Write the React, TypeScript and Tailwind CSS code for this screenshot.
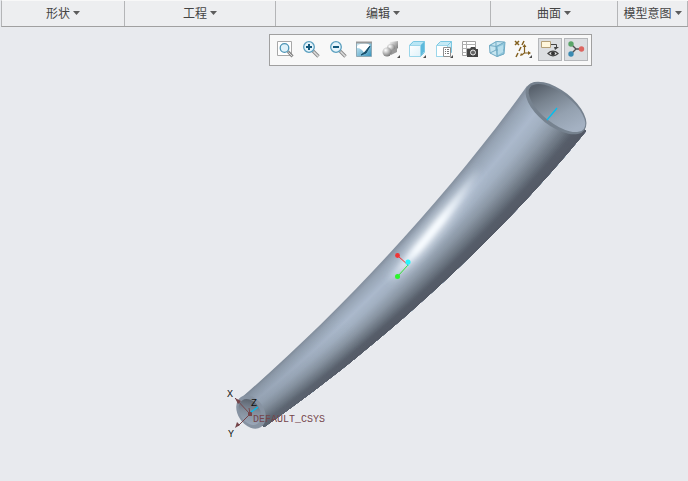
import type { ReactNode } from 'react'

type Point = [number, number]

const menus = ['形状', '工程', '编辑', '曲面', '模型意图']

// Silhouette of the swept tube as cubic control points
const upperEdge: Point[] = [[241, 398], [337, 315], [446, 199], [527, 86]]
const lowerEdge: Point[] = [[264, 427], [365, 357], [490, 249], [586, 131]]

// Shading across the tube, from the upper edge to the lower one
const shades: [number, number[]][] = [
  [0, [132, 144, 158]],
  [0.08, [150, 163, 179]],
  [0.3, [171, 185, 204]],
  [0.45, [162, 176, 193]],
  [0.62, [139, 151, 165]],
  [0.78, [108, 118, 130]],
  [0.88, [87, 94, 106]],
  [1, [84, 90, 102]],
]

const BANDS = 48

const mix = (t: number) =>
  upperEdge.map(([x, y], i) => [x + (lowerEdge[i][0] - x) * t, y + (lowerEdge[i][1] - y) * t])

const shadeAt = (t: number) => {
  const i = Math.max(1, shades.findIndex(([stop]) => stop >= t))
  const [a, from] = shades[i - 1]
  const [b, to] = shades[i]
  const k = (t - a) / (b - a)
  return `rgb(${from.map((c, n) => Math.round(c + (to[n] - c) * k)).join(',')})`
}

const bands = Array.from({ length: BANDS }, (_, i) => {
  const [a, b, c, d] = mix(i / BANDS)
  const [e, f, g, h] = mix(1)
  return {
    d: `M${a} C${b} ${c} ${d} L${h} C${g} ${f} ${e} Z`,
    fill: shadeAt((i + 0.5) / BANDS),
  }
})

const Tube = () => (
  <svg className="block h-auto w-full" viewBox="0 27 688 454" role="img" aria-label="DEFAULT_CSYS">
    <defs>
      <linearGradient id="topBore" x1="530" y1="98" x2="580" y2="122" gradientUnits="userSpaceOnUse">
        <stop offset="0" stopColor="#59626d" />
        <stop offset="0.3" stopColor="#78838f" />
        <stop offset="0.65" stopColor="#94a1b0" />
        <stop offset="1" stopColor="#a4b1c2" />
      </linearGradient>
      <linearGradient id="endBore" x1="240" y1="403" x2="259" y2="420" gradientUnits="userSpaceOnUse">
        <stop offset="0" stopColor="#59616c" />
        <stop offset="0.5" stopColor="#828d9b" />
        <stop offset="1" stopColor="#9aa7b8" />
      </linearGradient>
      <linearGradient id="endShade" x1="250" y1="412" x2="345" y2="318" gradientUnits="userSpaceOnUse">
        <stop offset="0" stopColor="#6c7885" stopOpacity="0.35" />
        <stop offset="1" stopColor="#6c7885" stopOpacity="0" />
      </linearGradient>
      <linearGradient id="shine" x1="388" y1="282" x2="480" y2="168" gradientUnits="userSpaceOnUse">
        <stop offset="0" stopColor="#e6f0fb" stopOpacity="0" />
        <stop offset="0.3" stopColor="#f8fcff" />
        <stop offset="0.55" stopColor="#f8fcff" />
        <stop offset="1" stopColor="#e6f0fb" stopOpacity="0" />
      </linearGradient>
      <filter id="soft" x="-50%" y="-50%" width="200%" height="200%">
        <feGaussianBlur stdDeviation="2" />
      </filter>
      <filter id="glow" x="-50%" y="-50%" width="200%" height="200%">
        <feGaussianBlur stdDeviation="5" />
      </filter>
    </defs>

    {bands.map((band, i) => (
      <path key={i} d={band.d} fill={band.fill} />
    ))}
    <path d={bands[0].d} fill="url(#endShade)" />
    <path
      d="M382 288Q434 235 486 160"
      fill="none"
      stroke="url(#shine)"
      strokeWidth="15"
      opacity="0.65"
      filter="url(#glow)"
    />
    <path d="M388 282Q434 234 480 168" fill="none" stroke="url(#shine)" strokeWidth="7" filter="url(#soft)" />

    <ellipse cx="556" cy="108" rx="36" ry="18" transform="rotate(38 556 108)" fill="#76828f" />
    <ellipse cx="557" cy="108" rx="34" ry="15" transform="rotate(38 557 108)" fill="url(#topBore)" />
    <path d="M547 120L557 108" stroke="#00bfef" strokeWidth="1.3" />

    <ellipse cx="251" cy="412" rx="18" ry="13" transform="rotate(56 251 412)" fill="#8793a2" />
    <ellipse cx="250" cy="412" rx="14" ry="10" transform="rotate(56 250 412)" fill="url(#endBore)" />

    {/* Default coordinate system */}
    <path d="M235 398L250 414L238 426M250 414L249 408" fill="none" stroke="#75464b" />
    <path d="M235 398l6 3-3 3zM235 428l2-6 3 3zM248 412h4v4h-4z" fill="#75464b" />
    <path d="M251 412L258 407" stroke="#00bfef" strokeWidth="1.3" />
    <g className="font-['Liberation_Mono',monospace] text-[10px]">
      <text x="227" y="397" fill="#111">X</text>
      <text x="228" y="437" fill="#111">Y</text>
      <text x="251" y="406" fill="#111">Z</text>
      <text x="253" y="422" fill="#75464b">DEFAULT_CSYS</text>
    </g>

    {/* Spin centre */}
    <path d="M398 256L408 265" stroke="#f02d2d" />
    <path d="M408 265L398 276" stroke="#33e433" />
    <path d="M408 262v4" stroke="#22eaf2" />
    <circle cx="397.500" cy="255.500" r="2.400" fill="#f23434" />
    <circle cx="397.500" cy="276.500" r="2.500" fill="#2cf52c" />
    <circle cx="408" cy="262" r="2.600" fill="#27f4fb" />
  </svg>
)

const Magnifier = ({ children }: { children?: ReactNode }) => (
  <>
    <path d="M11 11l5.500 5.500" stroke="#8b8b8b" strokeWidth="3.400" />
    <path d="M11.500 11.500l5 5" stroke="#dedede" strokeWidth="1.500" />
    <circle cx="7" cy="7" r="5.300" fill="#e6f4fb" stroke="#5a9fbf" strokeWidth="1.300" />
    {children}
  </>
)

const Corner = () => <path d="M18 15v3h-3z" fill="#4c4c4c" />

const tools: { label: string; pressed?: boolean; icon: ReactNode }[] = [
  {
    label: '重新调整',
    icon: (
      <>
        <path d="M1.500 1.500h14v14h-14z" fill="#fff" stroke="#a8a8a8" />
        <path d="M12 11.500l4.500 5" stroke="#888" strokeWidth="3" />
        <path d="M12.500 12.500l3.500 3.500" stroke="#ddd" />
        <circle cx="8.500" cy="8" r="4.300" fill="#e0f2fa" stroke="#4c94b5" strokeWidth="1.300" />
      </>
    ),
  },
  {
    label: '放大',
    icon: (
      <Magnifier>
        <path d="M7 4v6M4 7h6" stroke="#12577b" strokeWidth="2" />
      </Magnifier>
    ),
  },
  {
    label: '缩小',
    icon: (
      <Magnifier>
        <path d="M4 7h6" stroke="#12577b" strokeWidth="2" />
      </Magnifier>
    ),
  },
  {
    label: '重画',
    icon: (
      <>
        <path d="M1.500 2.500h15v14h-15z" fill="url(#repaint)" stroke="#8fa9b5" />
        <path d="M2 6c4-3 9-3 13-1l-6 8c-1-3-4-5-7-5z" fill="#fff" />
        <path d="M1 2.500h16" stroke="#999" strokeWidth="2" />
        <path d="M15 6l-5 6-4 3 5-2z" fill="#174e69" stroke="#174e69" />
      </>
    ),
  },
  {
    label: '渲染选项',
    icon: (
      <>
        <path d="M8 2l8-1v7l-5 4-4-4z" fill="url(#metal)" />
        <circle cx="9" cy="8" r="4" fill="url(#ball)" />
        <path d="M9 11l6-4v5l-6 3z" fill="#989898" />
        <circle cx="5" cy="12" r="4.500" fill="url(#ball)" />
        <Corner />
      </>
    ),
  },
  {
    label: '显示样式',
    icon: (
      <>
        <path d="M1 5l4-4h11l-3 4z" fill="#b9e6f5" />
        <path d="M13 5l3-4v11l-3 4z" fill="#5db9dc" />
        <path d="M1.500 5.500h11v11h-11z" fill="url(#face)" stroke="#9bd6ea" />
        <path d="M1.500 5.500l4-4h11v11l-4 4M12.500 5.500l4-4" fill="none" stroke="#7cc8e2" />
        <Corner />
      </>
    ),
  },
  {
    label: '已保存方向',
    icon: (
      <>
        <path d="M1.500 5.500l4-4h11v11l-4 4h-11z" fill="#c5eaf6" stroke="#7cc8e2" />
        <path d="M1.500 5.500h11v11h-11z" fill="#fff" stroke="#9bd6ea" />
        <path d="M12.500 5.500l4-4" stroke="#7cc8e2" />
        <path d="M8.500 7.500h7v9h-7z" fill="#fff" stroke="#8f8f8f" />
        <path d="M10 9.500h1m1 0h2M10 11.500h1m1 0h2M10 13.500h1m1 0h2" stroke="#777" />
        <Corner />
      </>
    ),
  },
  {
    label: '视图管理器',
    icon: (
      <>
        <path d="M1.500 1.500h13v14h-13z" fill="#fff" stroke="#a3a3a3" />
        <path d="M1.500 4.500h13M1.500 8.500h13M1.500 12.500h13M5.500 2v13" stroke="#b0b0b0" />
        <path d="M6 9h3l1-2h4l1 2h2v8H6z" fill="#444" />
        <circle cx="12" cy="12.500" r="2.500" fill="#666" stroke="#eee" />
      </>
    ),
  },
  {
    label: '透视图',
    icon: (
      <>
        <path d="M1 5l7-4 9 1-1 12-7 3-7-4z" fill="#c6e5f0" />
        <path d="M8 6l9-4-1 12-7 3z" fill="#8fc6dc" />
        <path d="M1.500 5.500l7 1 .5 10-7-3.500zM1.500 5.500l7-4 8 .5-8 4.500M2 13l6-3h8M8 1.500V10M17 2l-1 12-7 2.500" fill="none" stroke="#71aac3" />
        <path d="M10 7l5-2v7l-5 3z" fill="#b7deec" />
      </>
    ),
  },
  {
    label: '基准显示过滤器',
    icon: (
      <>
        <path d="M1 1l4 4M5 1L1 5M10 1L8 5M7 7l-2 4M4 13l-2 4" stroke="#83601f" strokeWidth="1.500" />
        <path d="M10.500 6v7h5M10.500 13l-3 2" fill="none" stroke="#83601f" strokeWidth="1.200" />
        <path d="M8.500 7l2-3 2 3zM14 11l3 2-3 2zM6 16l1-3 2 2z" fill="#83601f" />
        <Corner />
      </>
    ),
  },
  {
    label: '注释显示',
    pressed: true,
    icon: (
      <>
        <path d="M.5 1.500h9v6h-9z" fill="#fff6db" stroke="#b5a078" />
        <path d="M10 4.500h5.500V7" fill="none" stroke="#444" />
        <path d="M13 7h5l-4 3z" fill="#444" />
        <path d="M7 13.500c3-3 7-3 10 0-3 3-7 3-10 0z" fill="#e5e5e5" stroke="#444" strokeWidth="1.300" />
        <circle cx="12" cy="13.500" r="2" fill="#333" />
      </>
    ),
  },
  {
    label: '旋转中心',
    pressed: true,
    icon: (
      <>
        <path d="M4 4l5 5-5 5M9 9h6" fill="none" stroke="#505050" strokeWidth="1.400" />
        <circle cx="4" cy="4" r="2.700" fill="#5aa468" />
        <circle cx="4" cy="14" r="2.700" fill="#3a8ab2" />
        <circle cx="14.500" cy="9" r="2.700" fill="#dd6560" />
      </>
    ),
  },
]

const App = () => {
  return (
    <div className="flex min-h-screen flex-col overflow-hidden bg-[#e8eaee] font-['Noto_Sans_CJK_SC',sans-serif]">
      <svg className="absolute size-0" aria-hidden="true">
        <defs>
          <linearGradient id="repaint" x2="1" y2="1">
            <stop stopColor="#d9f1fa" />
            <stop offset="1" stopColor="#3491ba" />
          </linearGradient>
          <linearGradient id="face" x2="1" y2="1">
            <stop stopColor="#fff" />
            <stop offset="1" stopColor="#dff2fa" />
          </linearGradient>
          <linearGradient id="metal" x2="1" y2="1">
            <stop stopColor="#fff" />
            <stop offset="1" stopColor="#606060" />
          </linearGradient>
          <radialGradient id="ball" cx="0.350" cy="0.300" r="0.750">
            <stop stopColor="#fff" />
            <stop offset="1" stopColor="#737373" />
          </radialGradient>
        </defs>
      </svg>

      <nav className="ml-px grid h-[27px] grid-cols-[123fr_151fr_215fr_127fr_70fr] border-y border-t-[#f8f8f8] border-b-[#a0a0a0] border-l border-l-[#b4b5b7] bg-[#edeef0]">
        {menus.map((name) => (
          <button
            key={name}
            className="flex items-center justify-center gap-[3px] border-r border-[#b4b5b7] pb-px text-xs whitespace-nowrap text-[#444]"
          >
            {name}
            <svg className="h-1 w-[7px]" viewBox="0 0 7 4" aria-hidden="true">
              <path d="M0 0h7L3.500 4z" fill="#5c5c5c" />
            </svg>
          </button>
        ))}
      </nav>

      <main className="relative flex-1">
        <Tube />
        <div
          role="toolbar"
          className="absolute top-[7px] right-24 flex h-8 w-[323px] items-start justify-between border border-[#a0a0a0] bg-[#f8f8f8] px-[3px] pt-[3px]"
        >
          {tools.map(({ label, pressed, icon }) => (
            <button
              key={label}
              aria-label={label}
              aria-pressed={pressed}
              className={`flex h-[23px] w-6 items-start justify-center border pt-px ${pressed ? 'border-[#b5b7ba] bg-[#dcdee1]' : 'border-transparent'}`}
            >
              <svg className="size-[18px]" viewBox="0 0 18 18" fill="none">
                {icon}
              </svg>
            </button>
          ))}
        </div>
      </main>
    </div>
  )
}

export default App
